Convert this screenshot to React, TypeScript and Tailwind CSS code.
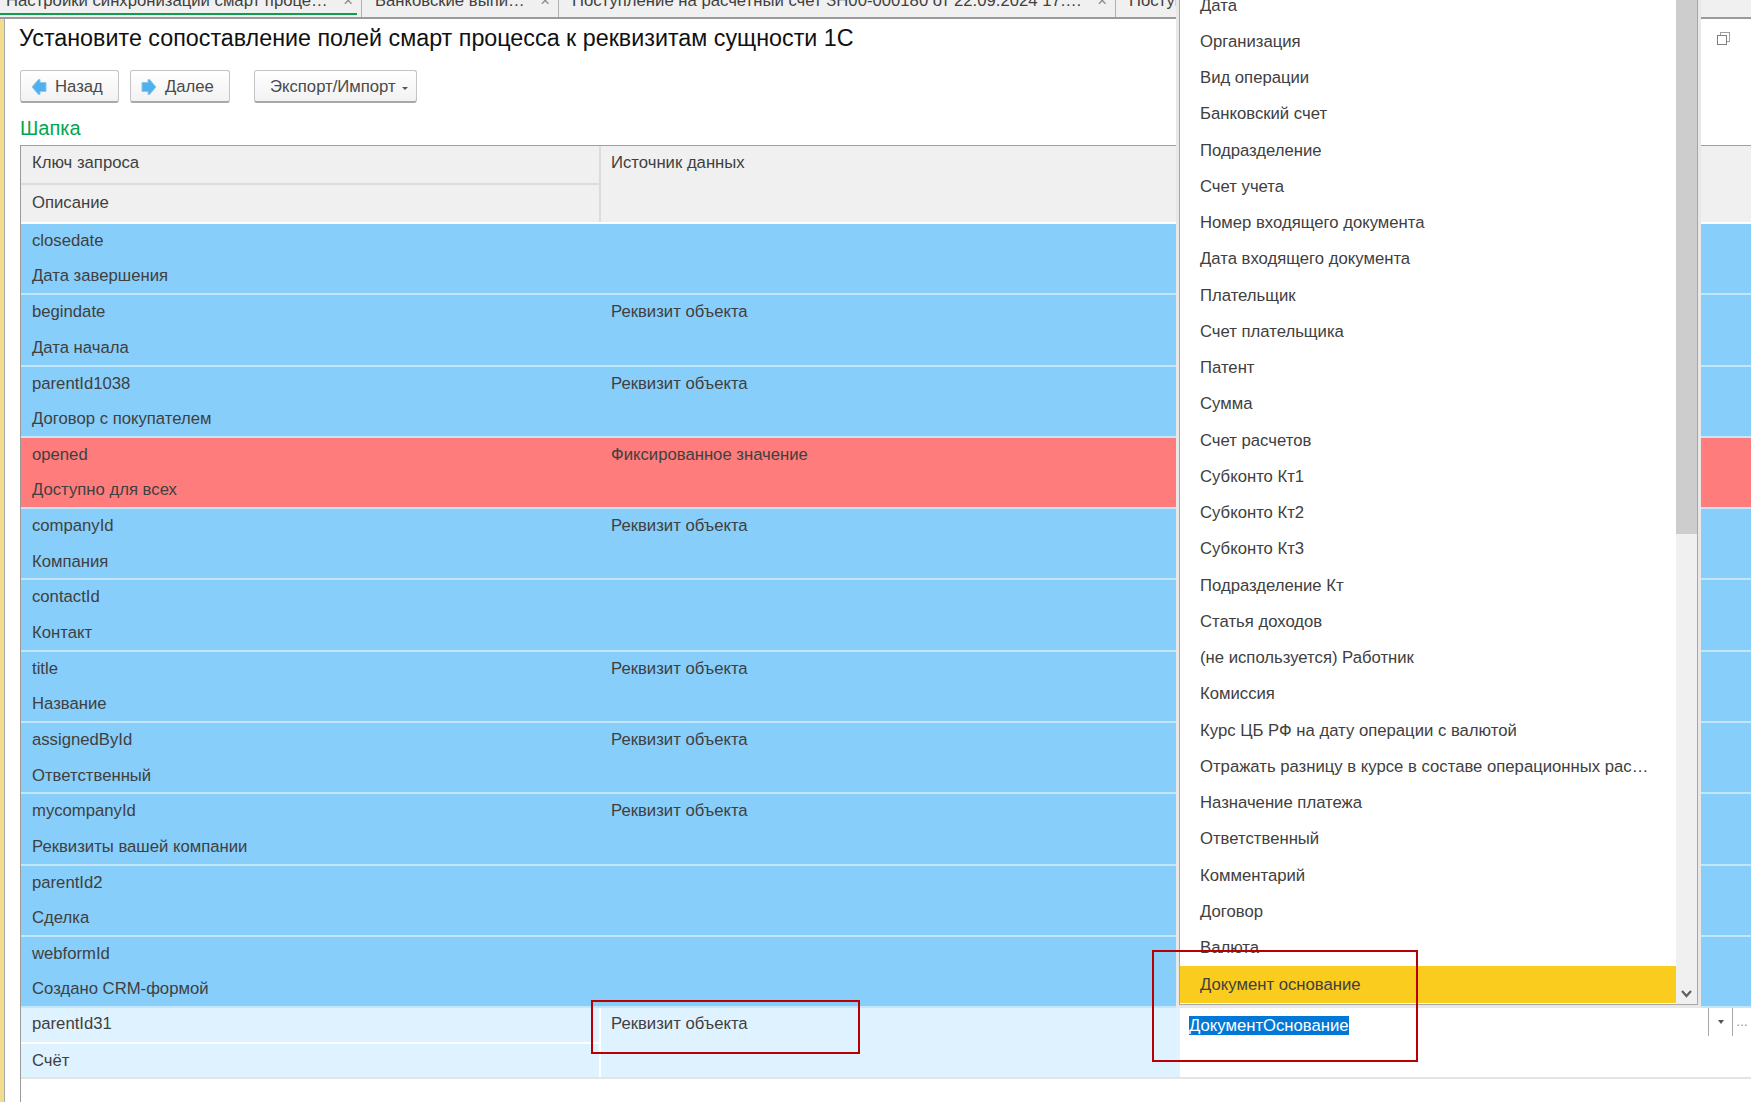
const tabs = [
  { title: "Настройки синхронизации смарт проце…", width: "w-[362px]", pad: "pl-[6px]", active: true },
  { title: "Банковские выпи…", width: "w-[197px]", pad: "pl-[13px]", active: false },
  { title: "Поступление на расчетный счет ЗН00-000180 от 22.09.2024 17:…", width: "w-[557px]", pad: "pl-[13px]", active: false },
];

const rows = [
  { key: "closedate", desc: "Дата завершения", source: "", color: "bg-[#87cefa]" },
  { key: "begindate", desc: "Дата начала", source: "Реквизит объекта", color: "bg-[#87cefa]" },
  { key: "parentId1038", desc: "Договор с покупателем", source: "Реквизит объекта", color: "bg-[#87cefa]" },
  { key: "opened", desc: "Доступно для всех", source: "Фиксированное значение", color: "bg-[#ff7c7c]" },
  { key: "companyId", desc: "Компания", source: "Реквизит объекта", color: "bg-[#87cefa]" },
  { key: "contactId", desc: "Контакт", source: "", color: "bg-[#87cefa]" },
  { key: "title", desc: "Название", source: "Реквизит объекта", color: "bg-[#87cefa]" },
  { key: "assignedById", desc: "Ответственный", source: "Реквизит объекта", color: "bg-[#87cefa]" },
  { key: "mycompanyId", desc: "Реквизиты вашей компании", source: "Реквизит объекта", color: "bg-[#87cefa]" },
  { key: "parentId2", desc: "Сделка", source: "", color: "bg-[#87cefa]" },
  { key: "webformId", desc: "Создано CRM-формой", source: "", color: "bg-[#87cefa]" },
];

const options = [
  "Дата",
  "Организация",
  "Вид операции",
  "Банковский счет",
  "Подразделение",
  "Счет учета",
  "Номер входящего документа",
  "Дата входящего документа",
  "Плательщик",
  "Счет плательщика",
  "Патент",
  "Сумма",
  "Счет расчетов",
  "Субконто Кт1",
  "Субконто Кт2",
  "Субконто Кт3",
  "Подразделение Кт",
  "Статья доходов",
  "(не используется) Работник",
  "Комиссия",
  "Курс ЦБ РФ на дату операции с валютой",
  "Отражать разницу в курсе в составе операционных рас…",
  "Назначение платежа",
  "Ответственный",
  "Комментарий",
  "Договор",
  "Валюта",
];

function ArrowIcon({ flip }: { flip?: boolean }) {
  return (
    <svg width="16" height="18" viewBox="0 0 16 18" className={flip ? "-scale-x-100" : ""}>
      <path d="M1 9 L7.5 1.5 L9 1.5 L9 4.5 L15 4.5 L15 13.5 L9 13.5 L9 16.5 L7.5 16.5 Z" fill="#4fb0ee" stroke="#8cc6ea" strokeWidth="1" strokeLinejoin="round" />
    </svg>
  );
}

function ToolButton({ label, icon, className }: { label: string; icon?: React.ReactNode; className: string }) {
  return (
    <div className={"h-[33px] flex items-center rounded-[3px] bg-gradient-to-b from-white to-[#f2f2f2] border border-[#c4c4c4] border-b-2 border-b-[#a8a8a8] text-[16.7px] text-[#4a4a4a] " + className}>
      {icon}
      {label}
    </div>
  );
}

export default function App() {
  return (
    <div className="relative w-full h-[1102px] overflow-hidden bg-white text-[#404040] font-['Liberation_Sans',Arial,sans-serif]">
      <div className="h-[19px] flex bg-[#f0f0f0] border-b-2 border-[#9a9a9a] overflow-hidden">
        {tabs.map(t => (
          <div key={t.title} className={t.width + " relative shrink-0 h-[17px] border-r border-[#b0b0b0] overflow-hidden"}>
            <div className={t.pad + " flex justify-between pr-[8px] -mt-[9px] text-[16.7px] leading-[20px] whitespace-nowrap"}>
              <span>{t.title}</span>
              <span className="text-[#888]">×</span>
            </div>
            {t.active && <div className="absolute left-0 right-1 bottom-[2px] h-[2px] bg-[#0f9d4f]"></div>}
          </div>
        ))}
        <div className="pl-[13px] -mt-[9px] text-[16.7px] leading-[20px] whitespace-nowrap">Поступление</div>
      </div>

      <div className="flex h-[1083px]">
        <div className="w-[5px] shrink-0 bg-[#f2dd8e] border-r border-[#a8a8a8]"></div>
        <div className="flex-1 min-w-0 pl-[15px]">
          <div className="h-[51px] pt-[5px] -ml-[1px] text-[23.3px] leading-[28px] text-[#111] whitespace-nowrap">
            Установите сопоставление полей смарт процесса к реквизитам сущности 1С
          </div>
          <div className="flex h-[33px]">
            <ToolButton label="Назад" icon={<span className="mr-[8px] mt-[1px]"><ArrowIcon /></span>} className="w-[99px] pl-[10px] pt-[1px]" />
            <ToolButton label="Далее" icon={<span className="mr-[8px] mt-[1px]"><ArrowIcon flip /></span>} className="w-[100px] ml-[11px] pl-[10px] pt-[1px]" />
            <ToolButton
              label="Экспорт/Импорт"
              className="w-[163px] ml-[24px] pl-[15px] pt-[1px]"
              icon={<span className="order-last ml-[6px] mt-[3px] w-0 h-0 border-x-[3px] border-x-transparent border-t-[3px] border-t-[#555]"></span>}
            />
          </div>
          <div className="h-[42px] pt-[13px] text-[20px] leading-[24px] text-[#00a651]">Шапка</div>

          <div className="border-l border-[#9a9a9a] h-full text-[16.7px]">
            <div className="flex border-t border-[#a0a0a0] bg-[#f0f0f0] h-[79px] border-b-2 border-b-white">
              <div className="w-[580px] border-r-2 border-[#dcdcdc]">
                <div className="h-[39px] pl-[11px] pb-[4px] flex items-center border-b-2 border-[#dcdcdc]">Ключ запроса</div>
                <div className="h-[37px] pl-[11px] pb-[2px] flex items-center">Описание</div>
              </div>
              <div className="pl-[10px] h-[33px] flex items-center">Источник данных</div>
            </div>
            {rows.map(r => (
              <div key={r.key} className={r.color + " flex h-[71.3px] border-b-2 border-[#c4e6fc]"}>
                <div className="w-[579px]">
                  <div className="h-[33px] pl-[11px] flex items-center">{r.key}</div>
                  <div className="h-[35px] pl-[11px] pt-[3px] flex items-center">{r.desc}</div>
                </div>
                <div className="pl-[11px] h-[33px] flex items-center">{r.source}</div>
              </div>
            ))}
            <div className="flex h-[71px] border-b-2 border-[#e4e4e4]">
              <div className="w-[580px] bg-[#dff2ff] border-r-2 border-white">
                <div className="h-[36px] pl-[11px] pb-[3px] flex items-center border-b-2 border-white">parentId31</div>
                <div className="h-[33px] pl-[11px] flex items-center">Счёт</div>
              </div>
              <div className="w-[579px] bg-[#dff2ff] pl-[10px]">
                <div className="h-[36px] pb-[5px] flex items-center">Реквизит объекта</div>
              </div>
              <div className="flex-1 flex justify-between h-[34px] pl-[9px]">
                <div className="flex items-center">
                  <span className="bg-[#0078d7] text-white leading-[19px]">ДокументОснование</span>
                </div>
                <div className="flex h-[28px]">
                  <div className="w-[25px] border-l border-r border-[#a8a8a8] flex justify-center items-center">
                    <div className="w-0 h-0 border-x-[3px] border-x-transparent border-t-[4px] border-t-[#555]"></div>
                  </div>
                  <div className="w-[18px] text-[#888] text-[12px] flex justify-center items-center">…</div>
                </div>
              </div>
            </div>
          </div>
        </div>
      </div>

      <svg className="absolute left-[1717px] top-[32px]" width="13" height="13" viewBox="0 0 13 13" fill="none">
        <rect x="3.5" y="0.5" width="9" height="9" stroke="#a0a0a0" />
        <rect x="0.5" y="3.5" width="9" height="9" fill="#fff" stroke="#808080" />
      </svg>

      <div className="absolute left-[1179px] top-0 w-[519px] h-[1005px] flex bg-white border-x border-b border-[#a6a6a6] shadow-[0_0_0_3px_#e8e8e8] text-[16.7px] overflow-hidden">
        <div className="flex-1 min-w-0 -mt-[13px]">
          {options.map(o => (
            <div key={o} className="h-[36.25px] pl-[20px] flex items-center whitespace-nowrap">{o}</div>
          ))}
          <div className="h-[37px] pl-[20px] pt-[1px] flex items-center bg-[#facc1e]">Документ основание</div>
        </div>
        <div className="w-[21px] shrink-0 bg-[#f0f0f0] flex flex-col justify-between">
          <div className="h-[534px] bg-[#cdcdcd]"></div>
          <svg className="ml-[5px] mb-[6px]" width="11" height="8" viewBox="0 0 11 8" fill="none">
            <path d="M1 1 L5.5 6 L10 1" stroke="#606060" strokeWidth="2.2" />
          </svg>
        </div>
      </div>

      <div className="absolute left-[591px] top-[1000px] w-[269px] h-[54px] border-2 border-[#b80000]"></div>
      <div className="absolute left-[1152px] top-[950px] w-[266px] h-[112px] border-2 border-[#b80000]"></div>
    </div>
  );
}
